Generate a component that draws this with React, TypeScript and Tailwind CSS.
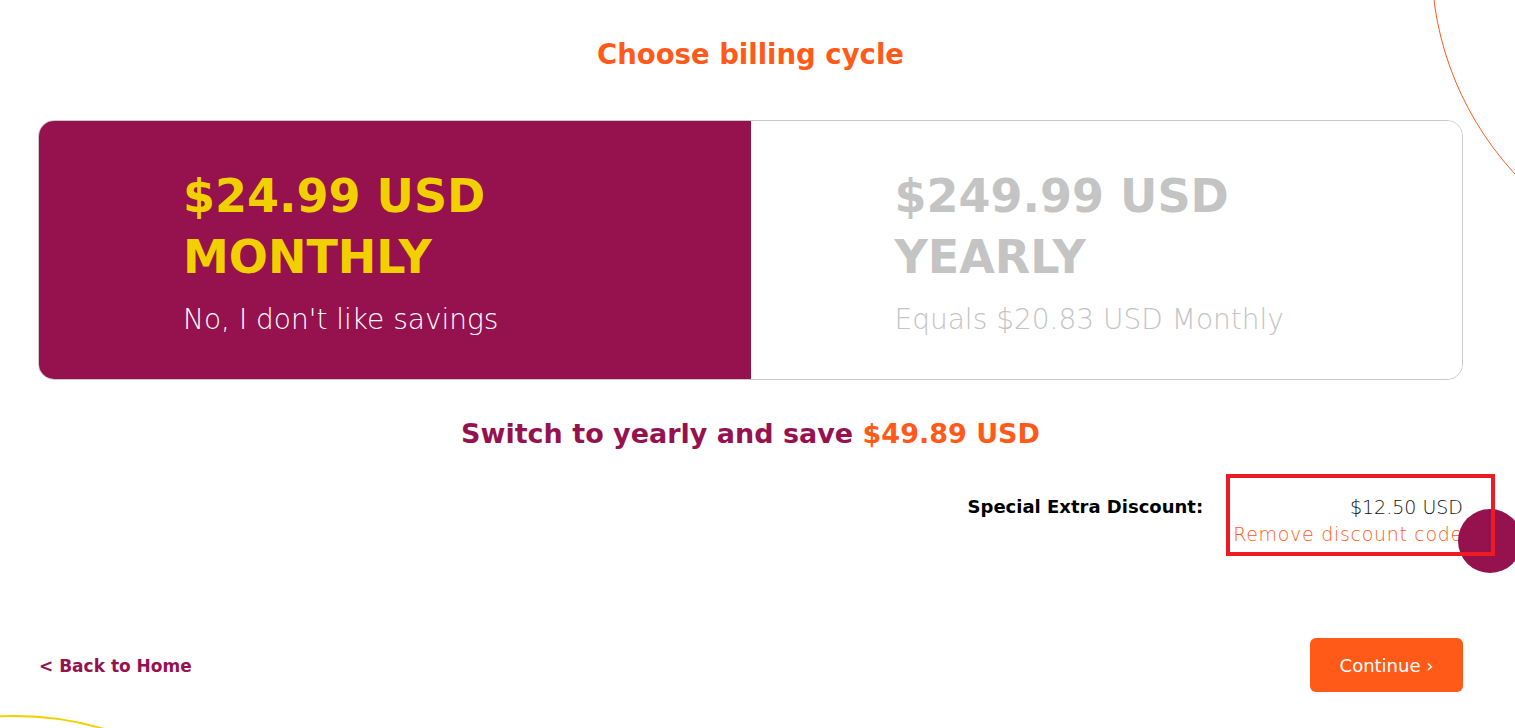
import { useState } from "react";

// billing cycle chooser — monthly / yearly toggle card, discount line, nav row

type Cycle = "monthly" | "yearly";

export default function App() {
  const [cycle, setCycle] = useState<Cycle>("monthly");

  const panel = (c: Cycle) =>
    cycle === c
      ? "bg-[#96124f] text-[#f2d000]"
      : "bg-white text-[#c4c4c4]";

  return (
    <div className="relative h-[728px] w-full overflow-hidden bg-white font-['DejaVu_Sans',sans-serif]">
      {/* ------------------------------------------------ decorations */}
      <div className="pointer-events-none absolute left-[1431px] top-[-353px] h-[628px] w-[628px] rounded-full border-[1.5px] border-[#ff5a1a]" />
      <div className="pointer-events-none absolute left-[-300px] top-[715px] h-[630px] w-[630px] rounded-full border-2 border-[#f2d000]" />

      <div className="pl-[38px] pr-[52px]">
        <h1 className="pt-[34px] text-center text-[27.5px] font-semibold leading-[40px] text-[#ff5a1a]">
          Choose billing cycle
        </h1>

        {/* ------------------------------------------------ cycle card */}
        <div className="mt-[46px] flex h-[260px] overflow-hidden rounded-2xl border border-[#c9c9c9]">
          <button
            onClick={() => setCycle("monthly")}
            className={`flex w-1/2 flex-col items-start pl-[144px] pt-[45px] text-left ${panel("monthly")}`}
          >
            <span className="text-[46px] font-bold leading-[61px]">$24.99 USD</span>
            <span className="text-[46px] font-bold leading-[61px]">MONTHLY</span>
            <span
              className={`mt-[14px] text-[28px] font-light leading-[36px] ${
                cycle === "monthly" ? "text-white" : "text-[#c4c4c4]"
              }`}
            >
              No, I don't like savings
            </span>
          </button>
          <button
            onClick={() => setCycle("yearly")}
            className={`flex w-1/2 flex-col items-start pl-[144px] pt-[45px] text-left ${panel("yearly")}`}
          >
            <span className="text-[46px] font-bold leading-[61px]">$249.99 USD</span>
            <span className="text-[46px] font-bold leading-[61px]">YEARLY</span>
            <span
              className={`mt-[14px] text-[28px] font-light leading-[36px] ${
                cycle === "yearly" ? "text-white" : "text-[#c4c4c4]"
              }`}
            >
              Equals $20.83 USD Monthly
            </span>
          </button>
        </div>

        <p className="mt-[34px] text-center text-[27px] font-semibold leading-[40px] text-[#96124f]">
          Switch to yearly and save <span className="text-[#ff5a1a]">$49.89 USD</span>
        </p>

        {/* --------------------------------------------- discount line */}
        <div className="mt-[40px] flex justify-end gap-[30px]">
          <span className="pt-[1px] text-[18px] font-bold leading-[24px] text-black">
            Special Extra Discount:
          </span>
          <div className="flex flex-col items-end">
            <span className="text-[19px] font-light leading-[27px] text-[#111]">$12.50 USD</span>
            <a href="#" className="text-[19px] font-light leading-[27px] tracking-[0.7px] text-[#ff5a1a]">
              Remove discount code
            </a>
          </div>
        </div>

        {/* ------------------------------------------------- nav row */}
        <div className="mt-[90px] flex items-center justify-between">
          <a href="#" className="pl-[1px] pt-[3px] text-[17px] font-semibold text-[#96124f]">
            &lt; Back to Home
          </a>
          <button className="flex h-[54px] w-[153px] items-center justify-center rounded-md bg-[#ff5a17] text-[18px] text-white">
            Continue ›
          </button>
        </div>
      </div>

      {/* annotation + blob overlay */}
      <div className="pointer-events-none absolute left-[1458px] top-[509px] h-[64px] w-[64px] rounded-full bg-[#96124f]" />
      <div className="pointer-events-none absolute left-[1226px] top-[474px] h-[82px] w-[269px] border-4 border-[#ed1c24]" />
    </div>
  );
}
